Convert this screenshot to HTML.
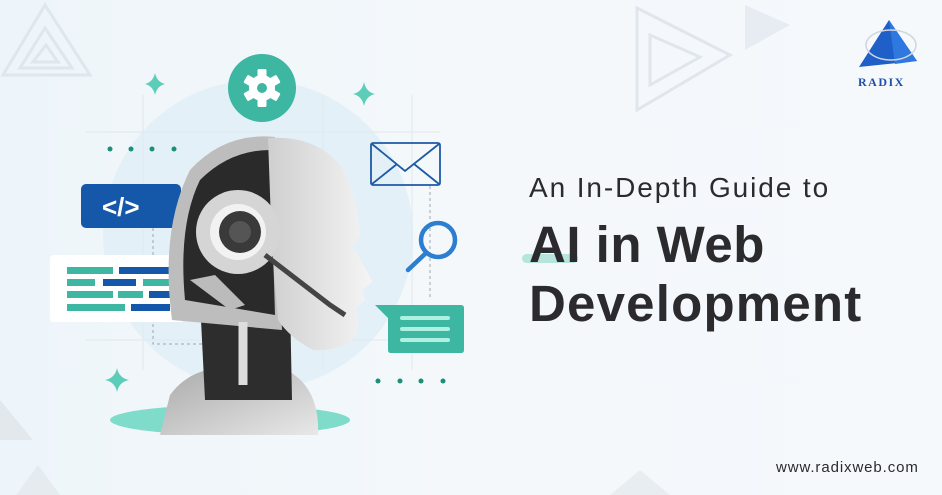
<!DOCTYPE html>
<html><head><meta charset="utf-8"><style>
html,body{margin:0;padding:0}
body{width:942px;height:495px;overflow:hidden;background:linear-gradient(90deg,#eef5fa,#f4f8fb 50%,#f5f9fc);position:relative;font-family:"Liberation Sans",sans-serif}
.t{position:absolute;left:529px;color:#2b2b2e;white-space:nowrap}
</style></head><body>
<svg width="942" height="495" style="position:absolute;left:0;top:0">
<g fill="none" stroke="#dfe6ec" stroke-width="3">
<path d="M45 5 L90 75 L3 75 Z"/><path d="M45 28 L72 68 L20 68 Z"/><path d="M46 45 L58 62 L33 62Z"/>
<path d="M637 8 L730 55 L637 110 Z"/><path d="M650 35 L700 57 L650 85 Z"/>
</g>
<path d="M745 5 L790 25 L745 50Z" fill="#e6ecf1"/>
<path d="M0 400 L33 440 L0 440Z" fill="#e3e8ec"/>
<path d="M38 465 L60 495 L16 495Z" fill="#e6ebef"/>
<path d="M640 470 L670 495 L610 495Z" fill="#e8edf1"/>
<circle cx="258" cy="235" r="155" fill="#e4f0f8"/>
<g stroke="#e0e8ee" stroke-width="1">
<line x1="85" y1="132" x2="440" y2="132"/><line x1="85" y1="340" x2="440" y2="340"/>
<line x1="143" y1="95" x2="143" y2="370"/><line x1="323" y1="95" x2="323" y2="370"/><line x1="412" y1="95" x2="412" y2="370"/>
</g>
<g stroke="#9aa7b3" stroke-dasharray="3 3" fill="none"><path d="M153 228 V344 H210"/><path d="M430 186 V300"/></g>
<circle cx="262" cy="88" r="34" fill="#3db6a2"/>
<g transform="translate(262,88)" fill="#fff">
<circle r="13"/>
<g id="tt"><rect x="-4.5" y="-19" width="9" height="8" rx="1.5"/></g>
<use href="#tt" transform="rotate(60)"/><use href="#tt" transform="rotate(120)"/><use href="#tt" transform="rotate(180)"/><use href="#tt" transform="rotate(240)"/><use href="#tt" transform="rotate(300)"/>
<circle r="5" fill="#3db6a2"/>
</g>
<g fill="#5ccdb9">
<path d="M155 73 Q157 82 165 84 Q157 86 155 95 Q153 86 145 84 Q153 82 155 73Z"/>
<path d="M364 82 Q366 92 375 94 Q366 96 364 106 Q362 96 353 94 Q362 92 364 82Z"/>
<path d="M117 368 Q119 378 129 380 Q119 382 117 392 Q115 382 105 380 Q115 378 117 368Z"/>
</g>
<g fill="#1a8f7a"><circle cx="110" cy="149" r="2.5"/><circle cx="131" cy="149" r="2.5"/><circle cx="152" cy="149" r="2.5"/><circle cx="174" cy="149" r="2.5"/>
<circle cx="378" cy="381" r="2.5"/><circle cx="400" cy="381" r="2.5"/><circle cx="421" cy="381" r="2.5"/><circle cx="443" cy="381" r="2.5"/></g>
<rect x="81" y="184" width="100" height="44" rx="5" fill="#1557a8"/>
<text x="102" y="216" font-family="Liberation Sans" font-weight="bold" font-size="26" fill="#fff">&lt;/&gt;</text>
<rect x="50" y="255" width="135" height="67" rx="4" fill="#fff"/>
<g>
<rect x="67" y="267" width="46" height="7" fill="#3db6a2"/><rect x="119" y="267" width="51" height="7" fill="#1557a8"/>
<rect x="67" y="279" width="28" height="7" fill="#3db6a2"/><rect x="103" y="279" width="33" height="7" fill="#1557a8"/><rect x="143" y="279" width="27" height="7" fill="#3db6a2"/>
<rect x="67" y="291" width="46" height="7" fill="#3db6a2"/><rect x="118" y="291" width="25" height="7" fill="#3db6a2"/><rect x="149" y="291" width="21" height="7" fill="#1557a8"/>
<rect x="67" y="304" width="58" height="7" fill="#3db6a2"/><rect x="131" y="304" width="39" height="7" fill="#1557a8"/>
</g>
<g fill="none" stroke="#1d5aa5" stroke-width="1.8"><rect x="371" y="143" width="69" height="42" rx="2"/><path d="M372 144 L405 171 L439 144 M372 184 L397 164 M439 184 L414 164"/></g>
<g fill="none" stroke="#2c7fd0" stroke-width="4.5" stroke-linecap="round"><circle cx="438" cy="240" r="17"/><path d="M426 253 L408 270"/></g>
<path d="M375 305 H461 Q464 305 464 308 V350 Q464 353 461 353 H391 Q388 353 388 350 V318 Z" fill="#3db6a2"/>
<g fill="#aef0e2"><rect x="400" y="316" width="50" height="4" rx="2"/><rect x="400" y="327" width="50" height="4" rx="2"/><rect x="400" y="338" width="50" height="4" rx="2"/></g>
<ellipse cx="230" cy="420" rx="120" ry="15" fill="#7fdccb"/>
<defs><linearGradient id="g1" x1="0" y1="0" x2="1" y2="0"><stop offset="0" stop-color="#cfcfcf"/><stop offset="1" stop-color="#f5f5f5"/></linearGradient>
<linearGradient id="g2" x1="0" y1="0" x2="1" y2="1"><stop offset="0" stop-color="#aaa"/><stop offset="1" stop-color="#e8e8e8"/></linearGradient></defs>
<path d="M160 435 L170 395 Q190 368 225 368 L290 372 Q320 390 318 435 Z" fill="url(#g2)"/>
<path d="M200 300 L290 300 L292 400 L205 400 Z" fill="#2d2d2d"/>
<path d="M172 320 Q160 230 190 170 Q225 132 275 137 L282 330 Z" fill="#bdbdbd"/>
<path d="M185 300 Q178 225 200 180 Q230 150 270 150 L275 315 Z" fill="#2a2a2a"/>
<path d="M268 138 Q315 135 340 165 Q358 195 360 235 L352 246 Q370 275 372 282 L362 290 L365 300 L356 308 Q362 325 352 340 Q335 352 313 350 Q290 338 278 320 L272 250 Z" fill="url(#g1)"/>
<circle cx="238" cy="232" r="42" fill="#d5d5d5"/>
<circle cx="238" cy="232" r="28" fill="#f2f2f2"/>
<circle cx="240" cy="232" r="21" fill="#3a3a3a"/>
<circle cx="240" cy="232" r="11" fill="#555"/>
<path d="M190 280 L215 275 L245 305 L230 310 Z" fill="#bbb"/>
<path d="M265 255 L330 305 L345 315" stroke="#444" stroke-width="5" fill="none"/>
<path d="M243 322 V385" stroke="#ddd" stroke-width="9"/>
</svg>
<svg width="70" height="70" style="position:absolute;left:855px;top:18px">
<path d="M34 2 L62 43 L4 49 Z" fill="#1f5fc8"/><path d="M34 2 L62 43 L40 46 Z" fill="#2f78e0"/>
<ellipse cx="36" cy="27" rx="25" ry="15" fill="none" stroke="#cfd6e0" stroke-width="1.5"/>
</svg>
<div style="position:absolute;left:858px;top:75px;font:bold 12px 'Liberation Serif',serif;color:#1f4fa8;letter-spacing:1.5px">RADIX</div>
<div style="position:absolute;left:522px;top:254px;width:56px;height:9px;border-radius:5px;background:#b7e4dc"></div>
<div class="t" style="top:172px;font-size:28px;letter-spacing:1.9px">An In-Depth Guide to</div>
<div class="t" style="top:215px;font-size:51px;font-weight:bold;letter-spacing:0.5px">AI in Web</div>
<div class="t" style="top:274px;font-size:51px;font-weight:bold;letter-spacing:1.2px">Development</div>
<div style="position:absolute;left:776px;top:459px;font-size:15px;color:#2b2b2e;letter-spacing:0.9px">www.radixweb.com</div>
</body></html>
